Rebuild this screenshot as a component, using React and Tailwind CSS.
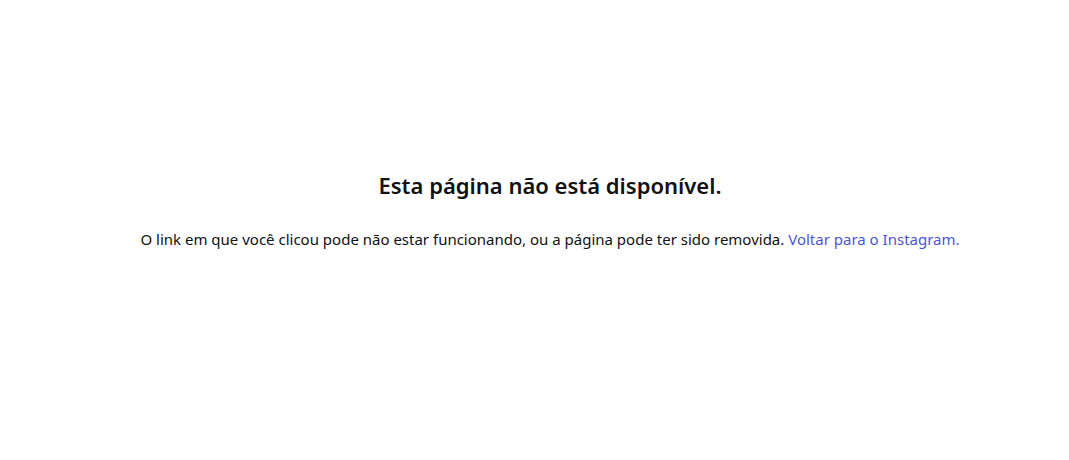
export default function App() {
  return (
    <div className="min-h-[460px] bg-white font-['Noto_Sans',sans-serif] text-[#262626]">
      <div className="flex flex-col items-center pl-[31px] pt-[170px] text-center">
        <h2 className="text-[22px] font-semibold leading-[30px] text-[#111]">Esta página não está disponível.</h2>
        <p className="mt-[30px] text-[15px] leading-[18px] text-[#111]">
          O link em que você clicou pode não estar funcionando, ou a página pode ter sido removida.{" "}
          <a href="#" className="text-[#4a56d6]">Voltar para o Instagram.</a>
        </p>
      </div>
    </div>
  );
}
